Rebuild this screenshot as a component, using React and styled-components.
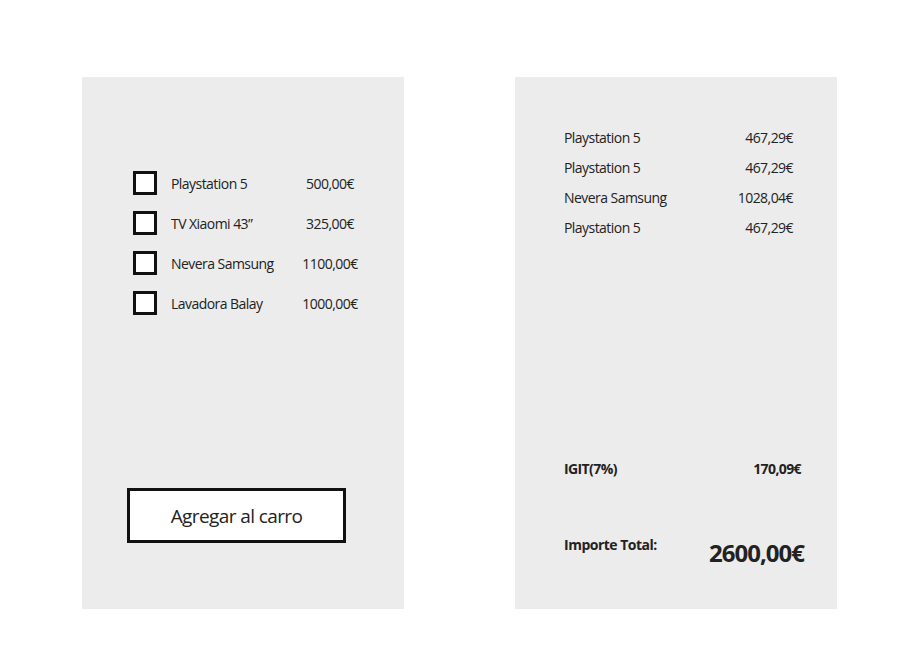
import React from 'react';
import styled, { createGlobalStyle } from 'styled-components';

const GlobalStyle = createGlobalStyle`
  body {
    margin: 0;
    background: #ffffff;
    font-family: "Open Sans", "Liberation Sans", sans-serif;
    color: #222222;
  }
`;

const Page = styled.div`
  display: flex;
  gap: 111px;
  padding: 77px 0 0 82px;
`;

const Panel = styled.div`
  width: 322px;
  height: 532px;
  background: #ececec;
  box-sizing: border-box;
  display: flex;
  flex-direction: column;
`;

const ProductPanel = styled(Panel)`
  padding: 94px 0 66px 45px;
`;

const ProductList = styled.div`
  display: flex;
  flex-direction: column;
  gap: 16px;
  padding-left: 6px;
`;

const ProductRow = styled.label`
  display: flex;
  align-items: center;
  height: 24px;
  font-size: 14px;
  letter-spacing: -0.55px;
`;

const Check = styled.span`
  width: 24px;
  height: 24px;
  box-sizing: border-box;
  border: 3px solid #111;
  background: #fff;
  flex: none;
`;

const ProductName = styled.span`
  width: 118px;
  margin-left: 14px;
`;

const ProductPrice = styled.span`
  width: 82px;
  text-align: center;
`;

const AddButton = styled.button`
  margin-top: auto;
  width: 219px;
  height: 55px;
  background: #fff;
  border: 3px solid #111;
  font-family: inherit;
  font-size: 19px;
  letter-spacing: -0.6px;
  color: #222;
`;

const CartPanel = styled(Panel)`
  padding: 46px 0 41px 49px;
`;

const CartLine = styled.div`
  display: flex;
  justify-content: space-between;
  line-height: 30px;
  font-size: 14px;
  letter-spacing: -0.55px;
  padding-right: ${p => p.$right}px;
`;

const Summary = styled.div`
  margin-top: auto;
  display: flex;
  flex-direction: column;
  gap: 56px;
`;

const TaxLine = styled.div`
  display: flex;
  justify-content: space-between;
  line-height: 20px;
  font-size: 14px;
  font-weight: 700;
  letter-spacing: -0.6px;
  padding-right: 36px;
`;

const TotalLine = styled.div`
  display: flex;
  justify-content: space-between;
  align-items: flex-start;
  padding-right: 33px;
`;

const TotalLabel = styled.span`
  line-height: 20px;
  font-size: 14px;
  font-weight: 700;
  letter-spacing: -0.5px;
`;

const TotalAmount = styled.span`
  margin-top: 3px;
  line-height: 30px;
  font-size: 24px;
  font-weight: 700;
  letter-spacing: -1px;
`;

const products = [
  { name: 'Playstation 5', price: '500,00€' },
  { name: 'TV Xiaomi 43”', price: '325,00€' },
  { name: 'Nevera Samsung', price: '1100,00€' },
  { name: 'Lavadora Balay', price: '1000,00€' },
];

const cart = [
  { name: 'Playstation 5', price: '467,29€' },
  { name: 'Playstation 5', price: '467,29€' },
  { name: 'Nevera Samsung', price: '1028,04€' },
  { name: 'Playstation 5', price: '467,29€' },
];

export default function App() {
  return (
    <>
      <GlobalStyle />
      <Page>
        <ProductPanel>
          <ProductList>
            {products.map((p, i) => (
              <ProductRow key={i}>
                <Check />
                <ProductName>{p.name}</ProductName>
                <ProductPrice>{p.price}</ProductPrice>
              </ProductRow>
            ))}
          </ProductList>
          <AddButton>Agregar al carro</AddButton>
        </ProductPanel>
        <CartPanel>
          {cart.map((c, i) => (
            <CartLine key={i} $right={44}>
              <span>{c.name}</span>
              <span>{c.price}</span>
            </CartLine>
          ))}
          <Summary>
            <TaxLine>
              <span>IGIT(7%)</span>
              <span>170,09€</span>
            </TaxLine>
            <TotalLine>
              <TotalLabel>Importe Total:</TotalLabel>
              <TotalAmount>2600,00€</TotalAmount>
            </TotalLine>
          </Summary>
        </CartPanel>
      </Page>
    </>
  );
}
